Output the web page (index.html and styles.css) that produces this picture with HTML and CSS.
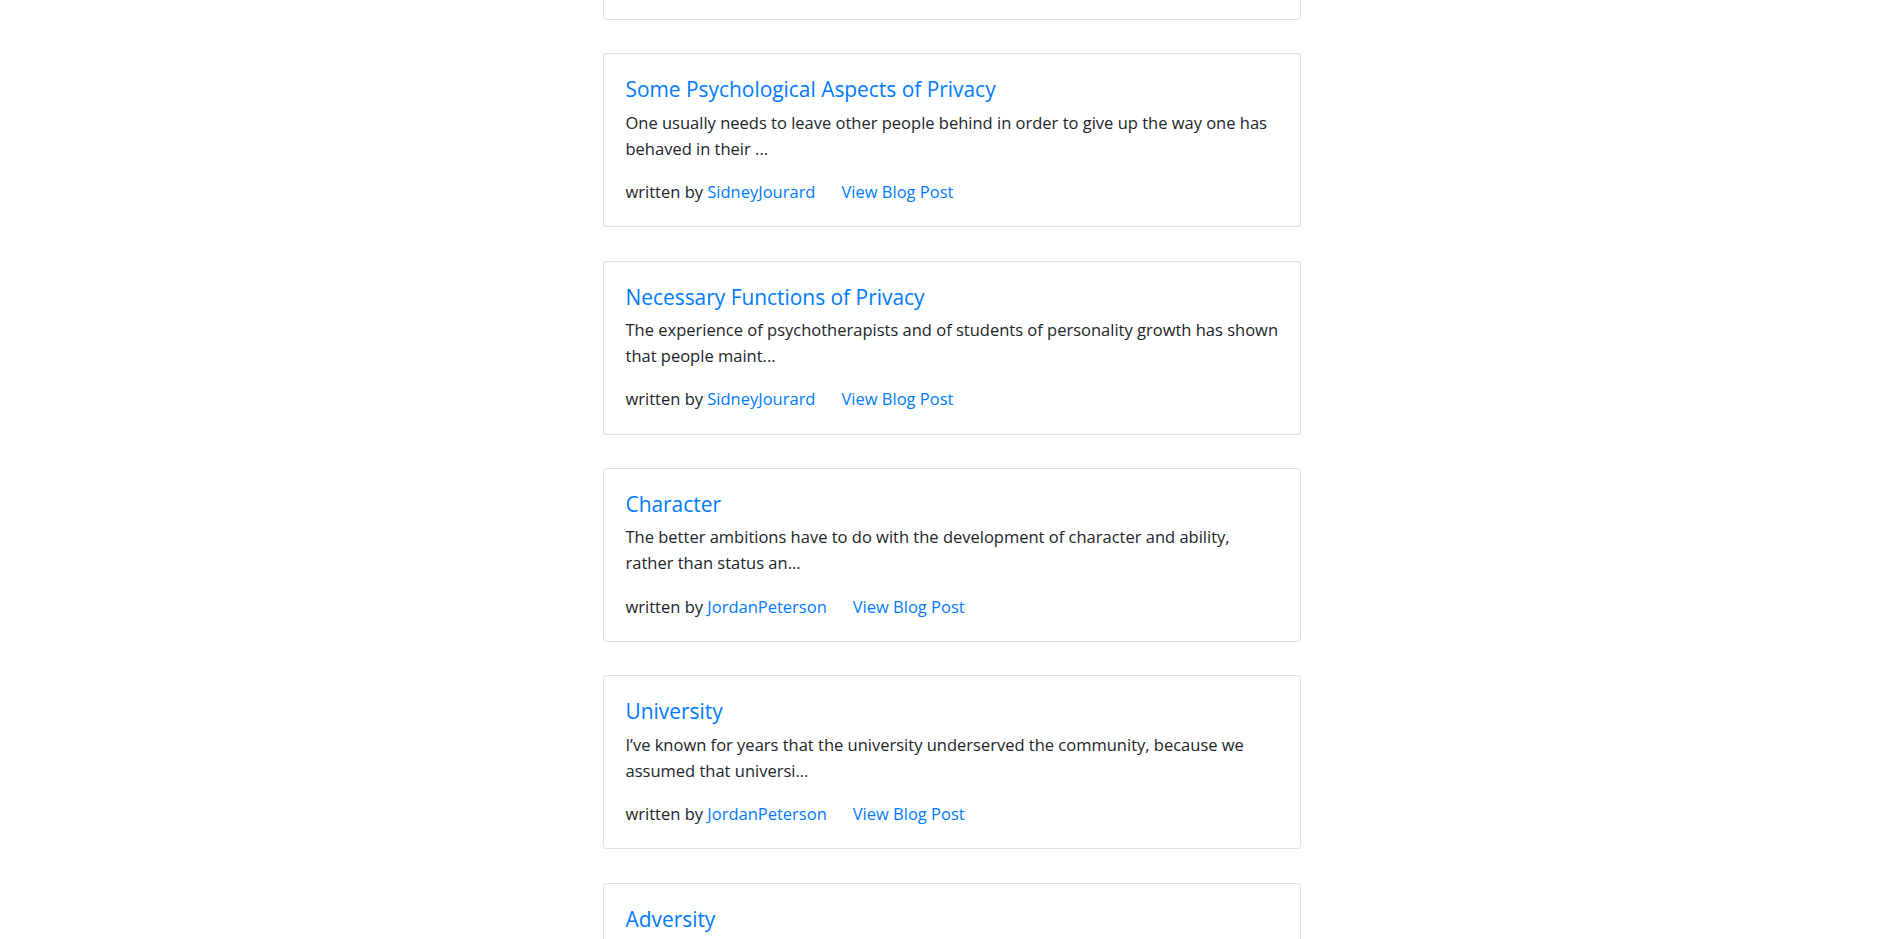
FILE: index.html
```html
<!DOCTYPE html>
<html lang="en">
<head>
<meta charset="utf-8">
<title>Blog Posts</title>
<link rel="stylesheet" href="styles.css">
</head>
<body>
<main class="posts">
  <article class="card">
    <h5 class="card-title"><a href="#">Solitude</a></h5>
    <p class="card-text">Solitude is the place of purification. Whenever we leave the crowd behind we find a new way of looking at ...</p>
    <div class="card-meta"><span>written by <a href="#">MartinBuber</a></span><a href="#">View Blog Post</a></div>
  </article>
  <article class="card">
    <h5 class="card-title"><a href="#">Some Psychological Aspects of Privacy</a></h5>
    <p class="card-text">One usually needs to leave other people behind in order to give up the way one has behaved in their ...</p>
    <div class="card-meta"><span>written by <a href="#">SidneyJourard</a></span><a href="#">View Blog Post</a></div>
  </article>
  <article class="card">
    <h5 class="card-title"><a href="#">Necessary Functions of Privacy</a></h5>
    <p class="card-text">The experience of psychotherapists and of students of personality growth has shown that people maint...</p>
    <div class="card-meta"><span>written by <a href="#">SidneyJourard</a></span><a href="#">View Blog Post</a></div>
  </article>
  <article class="card">
    <h5 class="card-title"><a href="#">Character</a></h5>
    <p class="card-text">The better ambitions have to do with the development of character and ability, rather&nbsp;than status an...</p>
    <div class="card-meta"><span>written by <a href="#">JordanPeterson</a></span><a href="#">View Blog Post</a></div>
  </article>
  <article class="card">
    <h5 class="card-title"><a href="#">University</a></h5>
    <p class="card-text">I’ve known for years that the university underserved the community, because we assumed that universi...</p>
    <div class="card-meta"><span>written by <a href="#">JordanPeterson</a></span><a href="#">View Blog Post</a></div>
  </article>
  <article class="card">
    <h5 class="card-title"><a href="#">Adversity</a></h5>
    <p class="card-text">Adversity is the first path to truth. We grow through the challenges that we meet rather than the comf...</p>
    <div class="card-meta"><span>written by <a href="#">JordanPeterson</a></span><a href="#">View Blog Post</a></div>
  </article>
</main>
</body>
</html>
```
FILE: styles.css
```css
html, body {
  margin: 0;
  padding: 0;
  background: #fff;
}

body {
  font-family: "Open Sans", "Noto Sans", sans-serif;
  font-size: 16.5px;
  color: #212529;
  overflow: hidden;
}

a {
  color: #007bff;
  text-decoration: none;
}

.posts {
  width: 698px;
  margin: -154px auto 0;
  display: flex;
  flex-direction: column;
  gap: 33.35px;
}

.card {
  box-sizing: border-box;
  height: 174px;
  border: 1px solid rgba(0, 0, 0, 0.125);
  border-radius: 4px;
  padding: 23px 14px 22px 22px;
  background: #fff;
  overflow: hidden;
}

.card-title {
  margin: 0 0 8.2px;
  font-size: 20.9px;
  font-weight: 400;
  line-height: 24px;
}

.card-text {
  margin: 0 0 18.3px;
  line-height: 26px;
}

.card-meta {
  display: flex;
  gap: 26px;
  line-height: 24px;
}
```
